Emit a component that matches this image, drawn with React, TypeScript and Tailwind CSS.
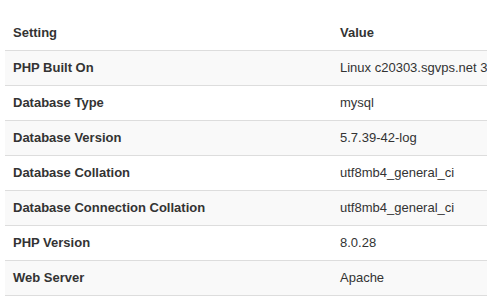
const rows: [string, string][] = [
  ["PHP Built On", "Linux c20303.sgvps.net 3.12.96-1.el7.elrepo.x86_64 #1 SMP"],
  ["Database Type", "mysql"],
  ["Database Version", "5.7.39-42-log"],
  ["Database Collation", "utf8mb4_general_ci"],
  ["Database Connection Collation", "utf8mb4_general_ci"],
  ["PHP Version", "8.0.28"],
  ["Web Server", "Apache"],
];

export default function App() {
  return (
    <div className="w-[487px] h-[299px] overflow-hidden bg-white pt-[15px] pl-[5px] text-[13px] text-[#333] font-['Liberation_Sans',Arial,sans-serif]">
      <table className="w-[800px] border-collapse text-left">
        <thead>
          <tr className="h-[35px]">
            <th className="w-[327px] px-2 font-bold">Setting</th>
            <th className="px-2 font-bold">Value</th>
          </tr>
        </thead>
        <tbody>
          {rows.map(([k, v], i) => (
            <tr
              key={k}
              className={`h-[35px] border-y border-[#ddd] ${i % 2 === 0 ? "bg-[#f9f9f9]" : "bg-white"}`}
            >
              <td className="px-2 font-bold whitespace-nowrap">{k}</td>
              <td className="px-2 whitespace-nowrap">{v}</td>
            </tr>
          ))}
        </tbody>
      </table>
    </div>
  );
}
